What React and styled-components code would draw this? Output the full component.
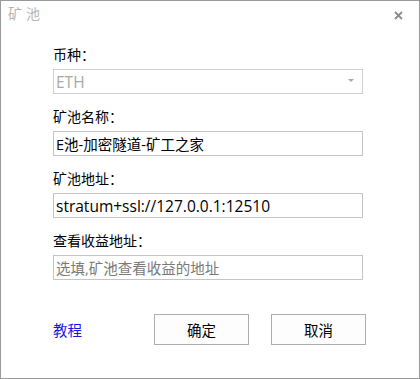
import React from "react"
import styled, { createGlobalStyle } from "styled-components"

const Global = createGlobalStyle`
    html, body {
        margin:0;
        padding:0;
        background:#fff;
    }
`
const Ventana = styled.div`
    box-sizing:border-box;
    width:420px;
    height:379px;
    border:1px solid #9a9a9a;
    background:#fff;
    display:flex;
    flex-direction:column;
    font-family:"Open Sans", "Noto Sans CJK SC", sans-serif;
    font-size:14px;
    color:#000;
`
const Barra = styled.div`
    height:43px;
    display:flex;
    align-items:flex-start;
    justify-content:space-between;
    padding:0 16px 0 7px;
`
const Titulo = styled.div`
    font-family:"Noto Sans CJK SC", sans-serif;
    font-size:14px;
    line-height:14px;
    margin-top:5px;
    color:#b4b4b4;
    letter-spacing:4px;
`
const Cerrar = styled.svg`
    margin-top:10px;
`
const Formulario = styled.div`
    display:flex;
    flex-direction:column;
    padding-left:52px;
    width:310px;
`
const Campo = styled.div`
    display:flex;
    flex-direction:column;
    margin-top:${props => props.primero ? "0" : "12px"};
`
const Etiqueta = styled.div`
    font-family:"Noto Sans CJK SC", sans-serif;
    font-size:14px;
    height:20px;
    line-height:20px;
    margin-bottom:5px;
`
const Caja = styled.div`
    box-sizing:border-box;
    height:25px;
    border:1px solid ${props => props.suave ? "#d0d0d0" : "#c4c4c4"};
    display:flex;
    align-items:center;
    justify-content:space-between;
    padding:0 8px 0 2px;
    font-family:"Open Sans", "Noto Sans CJK SC", sans-serif;
    font-size:${props => props.latino ? "15.5px" : "14.5px"};
    color:${props => props.color || "#000"};
    white-space:nowrap;
`
const Flecha = styled.span`
    width:0;
    height:0;
    border-left:3px solid transparent;
    border-right:3px solid transparent;
    border-top:3px solid #a8a8a8;
    margin-bottom:3px;
`
const Pie = styled.div`
    display:flex;
    align-items:center;
    padding-left:52px;
    margin-top:34px;
`
const Enlace = styled.a`
    font-family:"Noto Sans CJK SC", sans-serif;
    font-size:14.5px;
    color:#1515e6;
    text-decoration:none;
    width:101px;
`
const Boton = styled.button`
    box-sizing:border-box;
    width:95px;
    height:31px;
    margin-right:22px;
    border:1px solid #adadad;
    background:#fdfdfd;
    font-family:"Noto Sans CJK SC", sans-serif;
    font-size:14.5px;
    color:#000;
    padding:0;
`

const campos = [
    { etiqueta: "币种：", valor: "ETH", color: "#a8a8a8", select: true, latino: true },
    { etiqueta: "矿池名称：", valor: "E池-加密隧道-矿工之家" },
    { etiqueta: "矿池地址：", valor: "stratum+ssl://127.0.0.1:12510", latino: true },
    { etiqueta: "查看收益地址：", valor: "选填,矿池查看收益的地址", color: "#7a7a7a" },
]

export default () => (
    <Ventana>
        <Global />
        <Barra>
            <Titulo>矿池</Titulo>
            <Cerrar width="9" height="9" viewBox="0 0 9 9">
                <path d="M1 1L8 8M8 1L1 8" stroke="#8c8c8c" strokeWidth="1.8" />
            </Cerrar>
        </Barra>
        <Formulario>
            {
                campos.map((c, i) =>
                    <Campo key={i} primero={i === 0}>
                        <Etiqueta>{c.etiqueta}</Etiqueta>
                        <Caja color={c.color} suave={c.select} latino={c.latino}>
                            {c.valor}
                            {c.select && <Flecha />}
                        </Caja>
                    </Campo>
                )
            }
        </Formulario>
        <Pie>
            <Enlace href="#">教程</Enlace>
            <Boton>确定</Boton>
            <Boton>取消</Boton>
        </Pie>
    </Ventana>
)
